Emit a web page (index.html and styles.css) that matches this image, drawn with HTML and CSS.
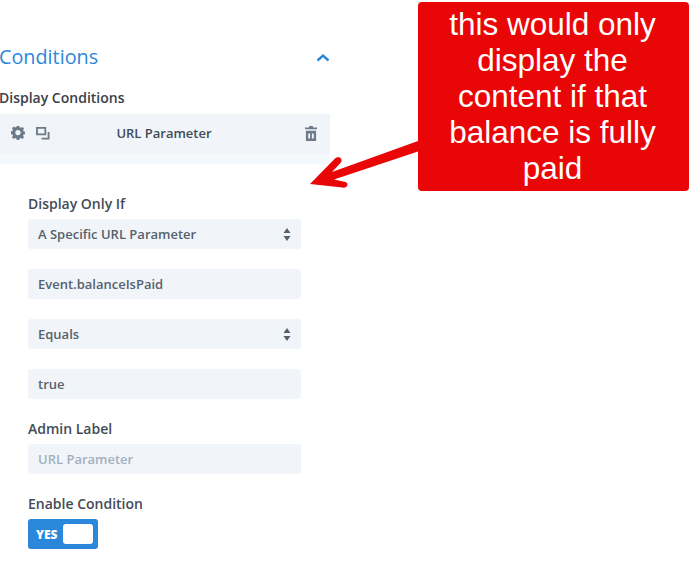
FILE: index.html
```html
<!DOCTYPE html>
<html lang="en">
<head>
<meta charset="utf-8">
<title>Conditions</title>
<link rel="stylesheet" href="styles.css">
</head>
<body>
<main class="page">
  <section class="panel">
    <header class="panel-head">
      <h2 class="panel-title">Conditions</h2>
      <svg class="chevron" width="14" height="9" viewBox="0 0 14 9"><path d="M1.500 7.500 7 2.500l5.500 5" fill="none" stroke="#2b87da" stroke-width="2.400"/></svg>
    </header>
    <h3 class="section-label">Display Conditions</h3>
    <div class="cond-bar">
      <div class="cond-icons">
        <svg width="14" height="14" viewBox="0 0 16 16"><path fill="#6c7a89" fill-rule="evenodd" d="M6.600 0h2.800l.4 2 1.300.6 1.800-1.100 2 2-1.100 1.800.5 1.300 2 .4v2.800l-2 .4-.5 1.300 1.100 1.800-2 2-1.800-1.100-1.300.5-.4 2H6.600l-.4-2-1.300-.5-1.800 1.100-2-2 1.100-1.800-.5-1.300-2-.4V6.600l2-.4.5-1.300-1.100-1.800 2-2 1.800 1.100 1.300-.6zM8 5a3 3 0 1 0 0 6 3 3 0 0 0 0-6z" transform="translate(0 -.5)"/></svg>
        <svg width="14" height="13" viewBox="0 0 15 14"><path fill="none" stroke="#6c7a89" stroke-width="2" d="M1 1h9v7H1zM13.500 5.500V12.500H6"/></svg>
      </div>
      <span class="cond-name">URL Parameter</span>
      <svg class="trash" width="12" height="15" viewBox="0 0 13 16"><path fill="#6c7a89" fill-rule="evenodd" d="M4.500 0h4v1.500H13V3.500H0V1.500h4.500zM1 5h11v11H1zM3.500 8v5.500h2V8zM7.500 8v5.500h2V8z"/></svg>
    </div>
    <div class="cond-strip"></div>
    <form class="fields">
      <label class="field-label first">Display Only If</label>
      <div class="input select"><span>A Specific URL Parameter</span><svg width="8" height="13" viewBox="0 0 8 13"><path fill="#56616e" d="M4 0l3.500 5h-7zM4 13l-3.500-5h7z"/></svg></div>
      <div class="input spaced">Event.balanceIsPaid</div>
      <div class="input select spaced"><span>Equals</span><svg width="8" height="13" viewBox="0 0 8 13"><path fill="#56616e" d="M4 0l3.500 5h-7zM4 13l-3.500-5h7z"/></svg></div>
      <div class="input spaced">true</div>
      <label class="field-label">Admin Label</label>
      <div class="input placeholder">URL Parameter</div>
      <label class="field-label">Enable Condition</label>
      <div class="toggle"><span class="toggle-text">YES</span><span class="knob"></span></div>
    </form>
  </section>
  <aside class="callout">this would only display the content if that balance is fully paid</aside>
  <svg class="arrow" width="120" height="50" viewBox="0 0 120 50"><path fill="#e90606" d="M0 43 25 17.500c2-2 5-1.500 6 0 1 1.500.5 3-.5 4.500L22 31 108 0v10.500L24 38.500l11.500 2.500c2 .5 2.500 2.500 1.500 4-1 1.500-2.500 2-4.500 1.500z"/></svg>
</main>
</body>
</html>
```

FILE: styles.css
```css
* { box-sizing: border-box; }
html, body { margin: 0; padding: 0; background: #fff; }
.page {
  position: relative;
  width: 691px;
  height: 567px;
  overflow: hidden;
  font-family: "Open Sans", sans-serif;
  padding-top: 43px;
}
.panel { width: 330px; }
.panel-head {
  height: 28px;
  display: flex;
  align-items: center;
  justify-content: space-between;
}
.panel-title {
  margin: 0 0 0 -1px;
  font-size: 19.800px;
  font-weight: 400;
  line-height: 28px;
  color: #2b87da;
}
.section-label {
  margin: 17px 0 0 -1px;
  font-size: 14px;
  font-weight: 600;
  line-height: 20px;
  color: #3a4048;
}
.cond-bar {
  margin-top: 6px;
  height: 40px;
  background: #f1f5f9;
  display: grid;
  grid-template-columns: 1fr auto 1fr;
  align-items: center;
  padding: 0 13px 2px 11px;
}
.cond-icons { display: flex; align-items: center; gap: 11px; }
.cond-name {
  font-size: 13px;
  font-weight: 600;
  color: #434b57;
}
.trash { justify-self: end; }
.cond-strip { height: 10px; background: #f5f9fc; }
.fields {
  padding: 0 29px 0 28px;
  display: flex;
  flex-direction: column;
}
.field-label {
  margin-top: 20px;
  font-size: 14px;
  font-weight: 600;
  line-height: 20px;
  color: #434b57;
  margin-bottom: 5px;
}
.field-label.first { margin-top: 30px; }
.input {
  height: 30px;
  border-radius: 3px;
  background: #f1f5f9;
  padding: 0 10px;
  font-size: 13px;
  font-weight: 600;
  line-height: 30px;
  color: #56616e;
}
.spaced { margin-top: 20px; }
.select {
  display: flex;
  align-items: center;
  justify-content: space-between;
}
.placeholder { color: #a3b0c2; }
.toggle {
  width: 70px;
  height: 30px;
  border-radius: 3px;
  background: #2b87da;
  display: flex;
  align-items: center;
  justify-content: space-between;
  padding: 0 5px 0 8px;
}
.toggle-text {
  font-size: 12px;
  font-weight: 800;
  color: #fff;
}
.knob {
  width: 30px;
  height: 20px;
  border-radius: 3px;
  background: #fff;
}
.callout {
  position: absolute;
  left: 418px;
  top: 2px;
  width: 271px;
  height: 189px;
  border-radius: 4px;
  background: #e90606;
  color: #fff;
  font-family: "Liberation Sans", Arial, sans-serif;
  font-size: 31.500px;
  line-height: 36px;
  text-align: center;
  padding: 4px 26px 0 24px;
}
.arrow {
  position: absolute;
  left: 310px;
  top: 141px;
}
```
